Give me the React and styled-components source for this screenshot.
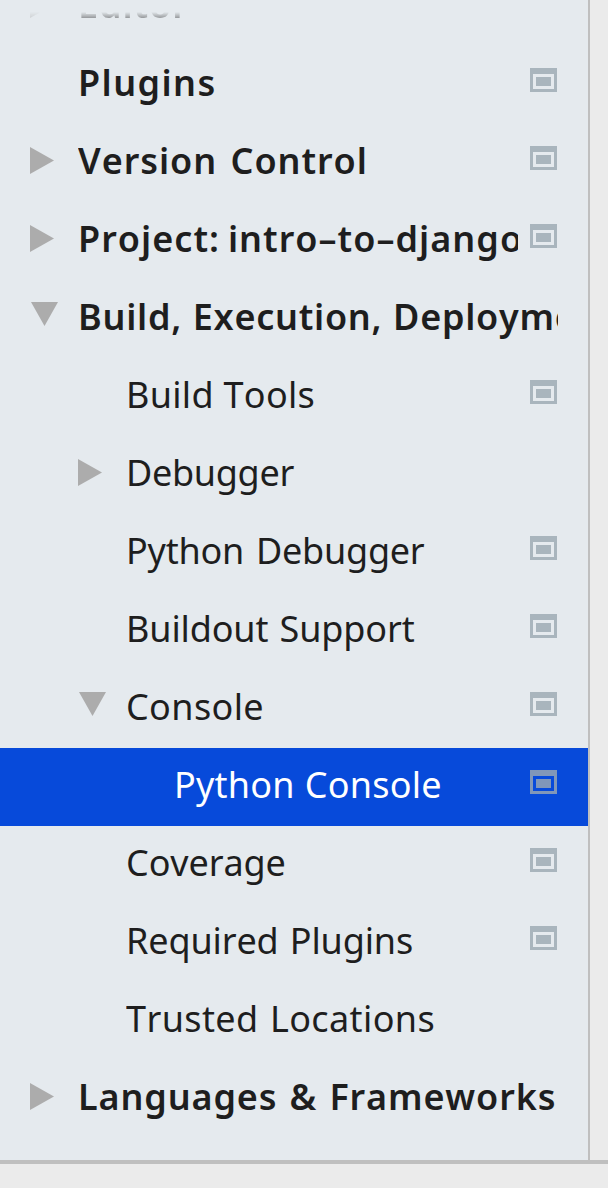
import React from 'react';
import styled, { createGlobalStyle } from 'styled-components';

const GlobalStyle = createGlobalStyle`
  *, *::before, *::after { box-sizing: border-box; }
  body { margin: 0; background: #ebebeb; }
`;

const Window = styled.div`
  display: flex;
  flex-direction: column;
  width: 608px;
  height: 1188px;
  overflow: hidden;
  background: #ebebeb;
  font-family: 'Noto Sans', 'Open Sans', sans-serif;
`;

const Body = styled.div`
  display: flex;
  height: 1164px;
  border-bottom: 4px solid #bfbfbf;
`;

const Tree = styled.nav`
  width: 590px;
  padding-top: 12px;
  background: #e5eaee;
  border-right: 2px solid #bfbfbf;
`;

const ScrolledEdge = styled.div`
  display: flex;
  flex-direction: column;
  justify-content: flex-end;
  height: 34px;
  overflow: hidden;
  mask-image: linear-gradient(to bottom, transparent 0, #000 15px);
`;

const Row = styled.div`
  display: flex;
  flex: none;
  align-items: flex-start;
  height: 78px;
  padding: 0 30px 0 ${(p) => 30 + p.$level * 48}px;
  background: ${(p) => (p.$selected ? '#074ada' : 'transparent')};
  color: ${(p) => (p.$selected ? '#ffffff' : '#1e1e1e')};
`;

const ArrowSlot = styled.span`
  flex: none;
  display: block;
  width: 48px;
  height: 78px;
  padding: ${(p) => (p.$open ? '22px 0 0 1px' : '23px 0 0 0')};
`;

const ArrowSvg = styled.svg`
  display: block;
  fill: #acacac;
`;

const Label = styled.span`
  flex: 1;
  min-width: 0;
  height: 78px;
  overflow: hidden;
  white-space: nowrap;
  font-size: 36px;
  line-height: 74px;
  font-kerning: none;
  font-weight: ${(p) => (p.$bold ? 600 : 400)};
  letter-spacing: ${(p) => p.$tracking}px;
  word-spacing: ${(p) => p.$gap}px;
`;

const ScopeSvg = styled.svg`
  flex: none;
  display: block;
  margin: 22px 1px 0 12px;
  fill: ${(p) => (p.$selected ? '#8097b9' : '#a9b5bd')};
`;

function Arrow({ state }) {
  return (
    <ArrowSlot $open={state === 'open'}>
      {state === 'closed' && (
        <ArrowSvg width="24" height="27" viewBox="0 0 24 27"><path d="M0 0L24 13.5L0 27Z" /></ArrowSvg>
      )}
      {state === 'open' && (
        <ArrowSvg width="27" height="24" viewBox="0 0 27 24"><path d="M0 0H27L13.5 24Z" /></ArrowSvg>
      )}
    </ArrowSlot>
  );
}

function ScopeIcon({ selected }) {
  return (
    <ScopeSvg $selected={selected} width="27" height="24" viewBox="0 0 27 24">
      <path fillRule="evenodd" d="M0 0H27V24H0ZM3 6V21H24V6Z" />
      <path d="M6 9H21V18H6Z" />
    </ScopeSvg>
  );
}

function TreeItem({ text, level = 0, arrow, bold, scope, selected, tracking = 0, gap = 0 }) {
  return (
    <Row $level={level} $selected={selected}>
      <Arrow state={arrow} />
      <Label $bold={bold} $tracking={tracking} $gap={gap}>{text}</Label>
      {scope && <ScopeIcon selected={selected} />}
    </Row>
  );
}

const items = [
  { text: 'Plugins', bold: true, scope: true, tracking: 1.4 },
  { text: 'Version Control', bold: true, arrow: 'closed', scope: true, tracking: 0.95, gap: 3 },
  { text: 'Project: intro–to–django', bold: true, arrow: 'closed', scope: true, tracking: 1.02, gap: -2.5 },
  { text: 'Build, Execution, Deployment', bold: true, arrow: 'open', tracking: 0.72, gap: 0.7 },
  { text: 'Build Tools', level: 1, scope: true, tracking: 0.3 },
  { text: 'Debugger', level: 1, arrow: 'closed', tracking: -0.3 },
  { text: 'Python Debugger', level: 1, scope: true, tracking: -0.25, gap: 3 },
  { text: 'Buildout Support', level: 1, scope: true, tracking: -0.13, gap: 2 },
  { text: 'Console', level: 1, arrow: 'open', scope: true, tracking: 0.37 },
  { text: 'Python Console', level: 2, scope: true, selected: true, tracking: 0.22, gap: 0.5 },
  { text: 'Coverage', level: 1, scope: true, tracking: -0.12 },
  { text: 'Required Plugins', level: 1, scope: true, tracking: -0.14, gap: 2 },
  { text: 'Trusted Locations', level: 1, tracking: 0.4, gap: 1.5 },
  { text: 'Languages & Frameworks', bold: true, arrow: 'closed', tracking: 0.86, gap: 2 },
];

export default function App() {
  return (
    <Window>
      <GlobalStyle />
      <Body>
        <Tree>
          <ScrolledEdge>
            <TreeItem text="Editor" bold arrow="closed" tracking={0.9} />
          </ScrolledEdge>
          {items.map((item) => <TreeItem key={item.text} {...item} />)}
        </Tree>
      </Body>
    </Window>
  );
}
